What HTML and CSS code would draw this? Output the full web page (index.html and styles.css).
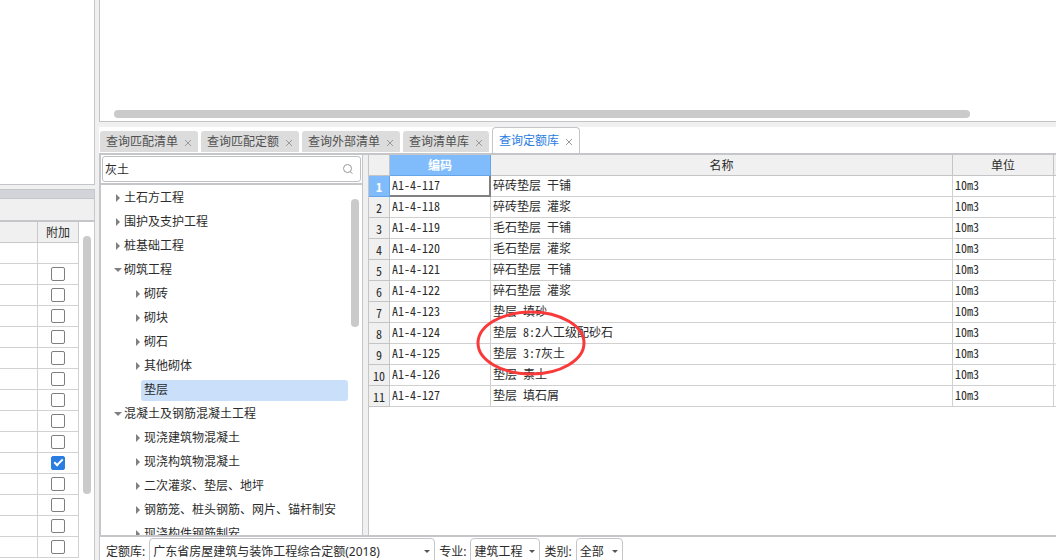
FILE: index.html
```html
<!DOCTYPE html>
<html lang="zh-CN">
<head>
<meta charset="utf-8">
<title>查询定额库</title>
<link rel="stylesheet" href="styles.css">
</head>
<body>
<div class="app">
  <aside class="side">
    <div class="side-top"></div>
    <div class="side-bottom">
      <div class="side-bar"></div>
      <div class="side-tools"></div>
      <div class="side-body">
        <table class="extra">
          <colgroup><col><col class="col-check"></colgroup>
          <thead><tr><th></th><th>附加</th></tr></thead>
          <tbody id="extra-rows"></tbody>
        </table>
        <div class="track-v"><div class="thumb-side"></div></div>
      </div>
    </div>
  </aside>
  <main class="main">
    <section class="preview"><div class="thumb-h"></div></section>
    <nav class="tabs">
      <div class="tab"><button class="tab-name">查询匹配清单</button><button class="close" aria-label="关闭"><svg viewBox="0 0 8 8"><path d="M1 1 L7 7 M7 1 L1 7"/></svg></button></div>
      <div class="tab"><button class="tab-name">查询匹配定额</button><button class="close" aria-label="关闭"><svg viewBox="0 0 8 8"><path d="M1 1 L7 7 M7 1 L1 7"/></svg></button></div>
      <div class="tab"><button class="tab-name">查询外部清单</button><button class="close" aria-label="关闭"><svg viewBox="0 0 8 8"><path d="M1 1 L7 7 M7 1 L1 7"/></svg></button></div>
      <div class="tab"><button class="tab-name">查询清单库</button><button class="close" aria-label="关闭"><svg viewBox="0 0 8 8"><path d="M1 1 L7 7 M7 1 L1 7"/></svg></button></div>
      <div class="tab active"><button class="tab-name">查询定额库</button><button class="close" aria-label="关闭"><svg viewBox="0 0 8 8"><path d="M1 1 L7 7 M7 1 L1 7"/></svg></button></div>
    </nav>
    <div class="query">
      <section class="tree-pane">
        <div class="search-row">
          <div class="search">
            <input type="text" value="灰土" aria-label="搜索">
            <svg class="lens" viewBox="0 0 12 12"><circle cx="5.5" cy="5.5" r="4"/><path d="M8 8.5 L10.5 10.5"/></svg>
          </div>
        </div>
        <div class="tree-body">
          <ul class="tree">
            <li class="node">土石方工程</li>
            <li class="node">围护及支护工程</li>
            <li class="node">桩基础工程</li>
            <li class="node open">砌筑工程</li>
            <li class="node sub">砌砖</li>
            <li class="node sub">砌块</li>
            <li class="node sub">砌石</li>
            <li class="node sub">其他砌体</li>
            <li class="leaf"><span class="picked">垫层</span></li>
            <li class="node open">混凝土及钢筋混凝土工程</li>
            <li class="node sub">现浇建筑物混凝土</li>
            <li class="node sub">现浇构筑物混凝土</li>
            <li class="node sub">二次灌浆、垫层、地坪</li>
            <li class="node sub">钢筋笼、桩头钢筋、网片、锚杆制安</li>
            <li class="node sub">现浇构件钢筋制安</li>
          </ul>
          <div class="track-v"><div class="thumb-tree"></div></div>
        </div>
      </section>
      <section class="grid-pane">
        <table class="grid">
          <colgroup><col class="col-num"><col class="col-code"><col><col class="col-unit"><col class="col-rest"></colgroup>
          <thead><tr><th></th><th class="hot">编码</th><th>名称</th><th>单位</th><th></th></tr></thead>
          <tbody>
            <tr><th class="hot">1</th><td class="current">A1-4-117</td><td>碎砖垫层 干铺</td><td>10m3</td><td></td></tr>
            <tr><th>2</th><td>A1-4-118</td><td>碎砖垫层 灌浆</td><td>10m3</td><td></td></tr>
            <tr><th>3</th><td>A1-4-119</td><td>毛石垫层 干铺</td><td>10m3</td><td></td></tr>
            <tr><th>4</th><td>A1-4-120</td><td>毛石垫层 灌浆</td><td>10m3</td><td></td></tr>
            <tr><th>5</th><td>A1-4-121</td><td>碎石垫层 干铺</td><td>10m3</td><td></td></tr>
            <tr><th>6</th><td>A1-4-122</td><td>碎石垫层 灌浆</td><td>10m3</td><td></td></tr>
            <tr><th>7</th><td>A1-4-123</td><td>垫层 填砂</td><td>10m3</td><td></td></tr>
            <tr><th>8</th><td>A1-4-124</td><td>垫层 8:2人工级配砂石</td><td>10m3</td><td></td></tr>
            <tr><th>9</th><td>A1-4-125</td><td>垫层 3:7灰土</td><td>10m3</td><td></td></tr>
            <tr><th>10</th><td>A1-4-126</td><td>垫层 素土</td><td>10m3</td><td></td></tr>
            <tr><th>11</th><td>A1-4-127</td><td>垫层 填石屑</td><td>10m3</td><td></td></tr>
          </tbody>
        </table>
        <svg class="mark" viewBox="0 0 110 66"><ellipse cx="55" cy="33" rx="53" ry="31"/></svg>
      </section>
    </div>
    <footer class="filters">
      <label for="lib">定额库:</label>
      <span class="pick lib"><select id="lib"><option>广东省房屋建筑与装饰工程综合定额(2018)</option></select></span>
      <label for="major">专业:</label>
      <span class="pick major"><select id="major"><option>建筑工程</option></select></span>
      <label for="kind">类别:</label>
      <span class="pick kind"><select id="kind"><option>全部</option></select></span>
    </footer>
  </main>
</div>
<script src="rows.js"></script>
</body>
</html>
```
FILE: rows.js
```js
const body = document.getElementById('extra-rows');
const checkedRow = 10;
for (let i = 0; i < 15; i++) {
  const row = body.insertRow();
  row.insertCell();
  const cell = row.insertCell();
  if (i > 0) {
    const box = document.createElement('input');
    box.type = 'checkbox';
    box.checked = i === checkedRow;
    box.setAttribute('aria-label', '附加');
    cell.append(box);
  }
}
```
FILE: styles.css
```css
*, *::before, *::after { box-sizing: border-box; }
body {
  margin: 0;
  background: #f0f0f0;
  color: #2b2b2b;
  font: 12px/20px "Noto Sans", "Noto Sans CJK SC", sans-serif;
}
button, input, select { font: inherit; color: inherit; margin: 0; }
.app { display: flex; gap: 4px; height: 100vh; overflow: hidden; }

/* left column */
.side { display: flex; flex-direction: column; gap: 4px; flex: 0 0 95px; }
.side-top {
  flex: 0 0 185px;
  background: #fff;
  border-right: 1px solid #c4c6cb;
  border-bottom: 1px solid #c4c4c6;
}
.side-bottom { flex: 1; min-height: 0; display: flex; flex-direction: column; border-right: 1px solid #c8c8cc; }
.side-bar { flex: 0 0 10px; background: #d3d4da; border: solid #c4c6cc; border-width: 1px 0; }
.side-tools { flex: 0 0 23px; border-bottom: 2px solid #c5c6c9; }
.side-body { flex: 1; min-height: 0; display: flex; background: #fff; overflow: hidden; }
.extra, .grid { border-collapse: separate; border-spacing: 0; table-layout: fixed; }
.extra { flex: 1; align-self: flex-start; }
.col-check { width: 41px; }
.extra th, .extra td {
  height: 21px;
  padding: 0;
  border: solid #d2d2d2;
  border-width: 0 1px 1px 0;
  text-align: center;
  font-weight: normal;
}
.extra th { padding-top: 2px; line-height: 18px; background: #f0f0f0; border-color: #c8c8c8; }
.extra input {
  appearance: none;
  display: block;
  width: 14px;
  height: 14px;
  margin: 0 auto;
  border: 1px solid #7e7e7e;
  border-radius: 2px;
  background: #fff;
}
.extra input:checked { background: #2a7de1; border-color: #2a7de1; }
.extra input:checked::before {
  content: "";
  display: block;
  width: 5px;
  height: 9px;
  margin: 0 0 0 4px;
  border: solid #fff;
  border-width: 0 2px 2px 0;
  transform: rotate(45deg);
}
.track-v { flex: 0 0 15px; }
.thumb-side { width: 8px; height: 258px; margin: 14px 0 0 4px; border-radius: 4px; background: #cacaca; }

/* right column */
.main { flex: 1; min-width: 0; display: flex; flex-direction: column; }
.preview {
  flex: 0 0 122px;
  display: flex;
  align-items: flex-end;
  padding: 0 86px 3px 14px;
  background: #fff;
  border: solid #c4c4c6;
  border-width: 0 0 1px 1px;
}
.thumb-h { flex: 1; height: 8px; border-radius: 4px; background: #cacaca; }
.tabs {
  flex: 0 0 28px;
  display: flex;
  align-items: flex-end;
  gap: 3px;
  margin-top: 5px;
  padding-left: 1px;
  border-bottom: 2px solid #c5c6c9;
  background: #fff;
}
.tab {
  display: flex;
  align-items: center;
  gap: 6px;
  height: 21px;
  padding: 1px 6px 0;
  margin-bottom: 1px;
  border-radius: 3px 3px 0 0;
  background: #dcdcdc;
  color: #505050;
}
.tab button { padding: 0; border: 0; background: none; }
.tab .close { width: 8px; height: 20px; }
.close svg { display: block; width: 8px; height: 8px; margin: 7px 0 5px; stroke: #999; fill: none; }
.tab.active {
  height: 26px;
  margin: 0;
  border: 1px solid #c5c6c9;
  border-bottom: 0;
  border-radius: 4px 4px 0 0;
  background: #fff;
  color: #2a7de1;
}
.query { flex: 0 0 382px; display: flex; gap: 5px; min-height: 0; border-bottom: 2px solid #c5c6c9; }

.tree-pane {
  flex: 0 0 264px;
  display: flex;
  flex-direction: column;
  background: #fff;
  border: solid #c5c6c9;
  border-width: 0 1px 0 2px;
}
.search-row { flex: 0 0 30px; padding: 1px; border-bottom: 2px solid #c5c6c9; }
.search {
  display: flex;
  align-items: center;
  height: 26px;
  padding: 0 6px 0 2px;
  border: 1px solid #bfc0c4;
  border-radius: 3px;
}
.search input { flex: 1; min-width: 0; padding: 2px 0 0; border: 0; outline: 0; background: none; }
.lens { width: 12px; height: 12px; fill: none; stroke: #999; }
.tree-body { flex: 1; min-height: 0; display: flex; overflow: hidden; }
.tree { flex: 1; min-width: 0; margin: 0; padding: 1px 0 0; list-style: none; white-space: nowrap; }
.tree li { display: flex; align-items: center; height: 24px; }
.node { padding-left: 15px; }
.node.sub { padding-left: 35px; }
.node::before {
  content: "";
  width: 4px;
  margin-right: 4px;
  border: solid transparent;
  border-width: 4px 0 4px 4px;
  border-left-color: #808080;
}
.node.open { padding-left: 13px; }
.node.open::before { width: 8px; margin-right: 2px; border-width: 4px 4px 0; border-top-color: #808080; border-left-color: transparent; }
.leaf { padding-left: 40px; }
.picked { flex: 1; height: 21px; padding-left: 3px; border-radius: 3px; background: #c9dffa; }
.tree-body .track-v { flex-basis: 14px; }
.thumb-tree { width: 8px; height: 128px; margin: 14px 0 0 3px; border-radius: 4px; background: #cacaca; }

.grid-pane { position: relative; flex: 1; min-width: 0; background: #fff; border-left: 1px solid #c5c5c5; }
.grid { width: 100%; }
.col-num { width: 21px; }
.col-code, .col-unit { width: 101px; }
.col-rest { width: 2px; }
.grid th, .grid td { height: 21px; padding: 0; border: solid #d0d0d0; border-width: 0 1px 1px 0; }
.grid th { padding-top: 2px; line-height: 18px; background: #f0f0f0; border-color: #c4c4c4; font-weight: normal; }
.grid td {
  padding: 0 0 2px 2px;
  font-family: "Noto Sans Mono CJK SC", "Noto Sans CJK SC", monospace;
  line-height: 18px;
  white-space: nowrap;
}
.grid tbody th { font-family: "Noto Sans Mono CJK SC", "Noto Sans CJK SC", monospace; }
.grid .hot { background: #80bbfb; border-color: #64a5ea; color: #fff; font-weight: bold; }
.grid .current { border-color: #808080; box-shadow: inset -1px -1px #808080; }
.grid tr > :last-child { border-right: 0; padding: 0; }
.mark { position: absolute; left: 107px; top: 155px; width: 110px; height: 66px; fill: none; stroke: #f93a3a; stroke-width: 3; }

.filters { flex: 1 0 28px; display: flex; align-items: flex-start; padding: 1px 0 0 6px; background: #fff; border-left: 1px solid #c5c6c9; }
.filters label { line-height: 27px; }
.pick { position: relative; margin: 0 4px; }
.pick select {
  appearance: none;
  width: 100%;
  height: 27px;
  padding: 0 16px 0 3px;
  border: 1px solid #c5c6c9;
  border-radius: 4px;
  background: #fff;
}
.pick::after {
  content: "";
  position: absolute;
  right: 5px;
  top: 12px;
  border: solid transparent;
  border-width: 3px 3px 0;
  border-top-color: #555;
  pointer-events: none;
}
.lib { width: 286px; }
.major { width: 70px; }
.kind { width: 47px; }
```
